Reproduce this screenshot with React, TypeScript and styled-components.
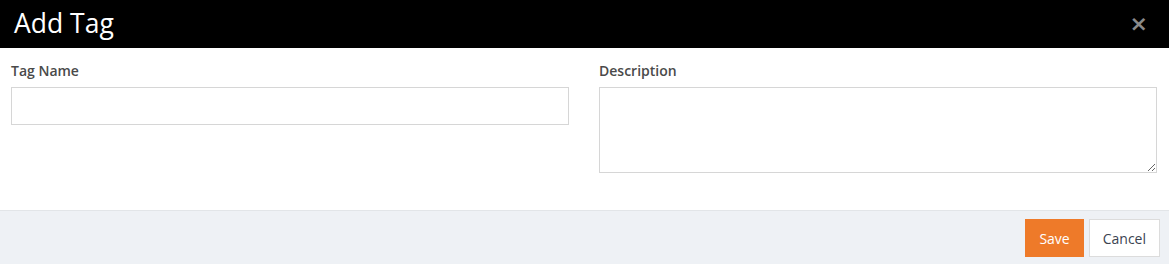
import React from "react";
import styled, { createGlobalStyle } from "styled-components";

const Global = createGlobalStyle`
  html, body { margin: 0; padding: 0; background: #fff; }
  body { font-family: "Open Sans", "Noto Sans", sans-serif; }
  * { box-sizing: border-box; }
`;

const Modal = styled.div`
  width: 1169px;
  height: 264px;
  display: flex;
  flex-direction: column;
  background: #fff;
`;

const Header = styled.div`
  height: 48px;
  background: #000;
  display: flex;
  align-items: center;
  justify-content: space-between;
  padding: 0 21px 0 14px;
`;

const Title = styled.h4`
  margin: 0;
  color: #fff;
  font-size: 26.5px;
  font-weight: 400;
  line-height: 1;
  padding-bottom: 1px;
`;

const Close = styled.button`
  border: 0;
  background: transparent;
  color: #8a8a8a;
  font-size: 22px;
  font-weight: 700;
  line-height: 1;
  padding: 0;
  cursor: pointer;
  font-family: "DejaVu Sans", sans-serif;
`;

const Body = styled.div`
  flex: 1;
  display: grid;
  grid-template-columns: 558px 558px;
  column-gap: 30px;
  padding: 13px 12px 0 11px;
  align-items: start;
`;

const Field = styled.div`
  display: flex;
  flex-direction: column;
`;

const Label = styled.label`
  font-size: 14px;
  font-weight: 600;
  color: #4a4a4a;
  line-height: 20px;
  margin-bottom: 6px;
`;

const Input = styled.input`
  height: 38px;
  border: 1px solid #d6d6d6;
  padding: 6px 12px;
  font-size: 14px;
  font-family: inherit;
  outline: none;
`;

const TextArea = styled.textarea`
  height: 86px;
  border: 1px solid #d6d6d6;
  padding: 6px 12px;
  font-size: 14px;
  font-family: inherit;
  outline: none;
  resize: vertical;
`;

const Footer = styled.div`
  height: 54px;
  background: #eef1f5;
  border-top: 1px solid #e2e5e8;
  display: flex;
  justify-content: flex-end;
  align-items: flex-start;
  gap: 5px;
  padding: 8px 9px 0 0;
`;

const Button = styled.button<{ $primary?: boolean }>`
  height: 38px;
  padding: 0 13px;
  font-family: inherit;
  font-size: 14px;
  border: 1px solid ${(p) => (p.$primary ? "#ee7a29" : "#dcdcdc")};
  background: ${(p) => (p.$primary ? "#ee7a29" : "#fff")};
  color: ${(p) => (p.$primary ? "#fff" : "#3b4350")};
  cursor: pointer;
`;

export default function App() {
  return (
    <>
      <Global />
      <Modal>
        <Header>
          <Title>Add Tag</Title>
          <Close aria-label="Close">×</Close>
        </Header>
        <Body>
          <Field>
            <Label>Tag Name</Label>
            <Input type="text" />
          </Field>
          <Field>
            <Label>Description</Label>
            <TextArea />
          </Field>
        </Body>
        <Footer>
          <Button $primary>Save</Button>
          <Button>Cancel</Button>
        </Footer>
      </Modal>
    </>
  );
}
